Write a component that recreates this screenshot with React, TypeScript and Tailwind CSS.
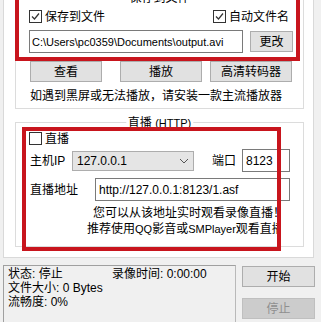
import React from 'react';

function CheckBox({ checked }: { checked: boolean }) {
    return (
        <span className="flex h-[13px] w-[13px] shrink-0 items-center justify-center border border-[#333333] bg-white">
            {checked && (
                <svg width="11" height="11" viewBox="0 0 11 11">
                    <path d="M2 5.5 L4.5 8 L9 2.5" fill="none" stroke="#333333" strokeWidth="1.2" />
                </svg>
            )}
        </span>
    );
}

function WinButton({ children, className = '', disabled = false }: { children: React.ReactNode; className?: string; disabled?: boolean }) {
    return (
        <button
            className={`flex h-[21px] shrink-0 items-center justify-center border ${disabled ? 'border-[#bfbfbf] bg-[#cccccc] text-[#8f8f8f]' : 'border-[#adadad] bg-[#e1e1e1] text-black'} ${className}`}
        >
            {children}
        </button>
    );
}

export default function App() {
    return (
        <div className="relative h-[322px] w-[321px] overflow-hidden bg-[#f0f0f0] font-['Liberation_Sans','Noto_Sans_CJK_SC',sans-serif] text-[12px] leading-[16px] text-black">
            {/* tab page */}
            <div className="ml-[3px] mt-[-20px] h-[278px] w-[311px] border-x border-b border-[#d9d9d9] bg-white pl-[11px] pt-[17px]">
                {/* save to file group */}
                <div className="relative h-[112px] w-[289px] border border-[#dcdcdc] pl-[13px] pt-[12px]">
                    <span className="absolute left-1/2 top-[-8px] -translate-x-1/2 whitespace-nowrap bg-white px-[2px]">保存到文件</span>
                    <div className="flex h-[13px] items-center justify-between pr-[14px]">
                        <div className="flex items-center gap-[3px]">
                            <CheckBox checked />
                            <span>保存到文件</span>
                        </div>
                        <div className="flex items-center gap-[3px]">
                            <CheckBox checked />
                            <span>自动文件名</span>
                        </div>
                    </div>
                    <div className="mt-[7px] flex h-[23px] items-center">
                        <div className="flex h-[23px] w-[214px] items-center overflow-hidden whitespace-nowrap border border-[#7a7a7a] bg-white px-[2px] text-[11px]">
                            C:\Users\pc0359\Documents\output.avi
                        </div>
                        <WinButton className="ml-[7px] w-[43px]">更改</WinButton>
                    </div>
                    <div className="mt-[8px] flex">
                        <WinButton className="ml-px w-[72px]">查看</WinButton>
                        <WinButton className="ml-[18px] w-[82px]">播放</WinButton>
                        <WinButton className="ml-[8px] w-[82px]">高清转码器</WinButton>
                    </div>
                    <div className="ml-px mt-[6px] whitespace-nowrap">如遇到黑屏或无法播放，请安装一款主流播放器</div>
                </div>

                {/* live http group */}
                <div className="relative mt-[13px] h-[125px] w-[289px] border border-[#dcdcdc] pl-[13px] pt-[9px]">
                    <span className="absolute left-1/2 top-[-8px] -translate-x-1/2 whitespace-nowrap bg-white px-[2px]">
                        直播 <span className="text-[11px]">(HTTP)</span>
                    </span>
                    <div className="flex h-[13px] items-center gap-[3px]">
                        <CheckBox checked={false} />
                        <span>直播</span>
                    </div>
                    <div className="mt-[4px] flex h-[23px] items-center">
                        <span className="ml-px w-[42px] shrink-0">主机IP</span>
                        <div className="flex h-[20px] w-[122px] items-center justify-between border border-[#adadad] bg-[#e5e5e5] pl-[4px] pr-[4px]">
                            <span>127.0.0.1</span>
                            <svg width="10" height="6" viewBox="0 0 10 6">
                                <path d="M1 1 L5 5 L9 1" fill="none" stroke="#555555" strokeWidth="1" />
                            </svg>
                        </div>
                        <span className="ml-[18px] w-[30px] shrink-0">端口</span>
                        <div className="flex h-[23px] w-[48px] items-center border border-[#7a7a7a] bg-white pl-[3px]">8123</div>
                    </div>
                    <div className="mt-[6px] flex h-[23px] items-center">
                        <span className="ml-px w-[65px] shrink-0">直播地址</span>
                        <div className="flex h-[23px] w-[195px] items-center whitespace-nowrap border border-[#7a7a7a] bg-white pl-[3px]">
                            http://127.0.0.1:8123/1.asf
                        </div>
                    </div>
                    <div className="mt-[4px] w-[251px] overflow-hidden whitespace-nowrap">
                        <div className="pl-[64px]">您可以从该地址实时观看录像直播！</div>
                        <div className="pl-[58px]">
                            推荐使用<span className="text-[11px]">QQ</span>影音或<span className="text-[11px]">SMPlayer</span>观看直播
                        </div>
                    </div>
                </div>
            </div>

            {/* status bar */}
            <div className="mt-[7px] flex">
                <div className="ml-[3px] h-[60px] w-[233px] border border-[#b9b9b9] border-l-[#a0a0a0] border-t-[#a0a0a0] pl-[4px] pt-px leading-[14px]">
                    <div className="flex">
                        <span className="w-[104px]">状态: 停止</span>
                        <span>录像时间: 0:00:00</span>
                    </div>
                    <div>文件大小: 0 Bytes</div>
                    <div>流畅度: 0%</div>
                </div>
                <div className="ml-[6px] flex flex-col">
                    <WinButton className="mt-px w-[73px]">开始</WinButton>
                    <WinButton className="mt-[11px] w-[73px]" disabled>停止</WinButton>
                </div>
            </div>

            {/* red annotation frames */}
            <div className="absolute left-[15px] top-[-10px] h-[71px] w-[285px] border-4 border-[#c8151d]" />
            <div className="absolute left-[22px] top-[127px] h-[124px] w-[259px] border-4 border-[#c8151d]" />
        </div>
    );
}
